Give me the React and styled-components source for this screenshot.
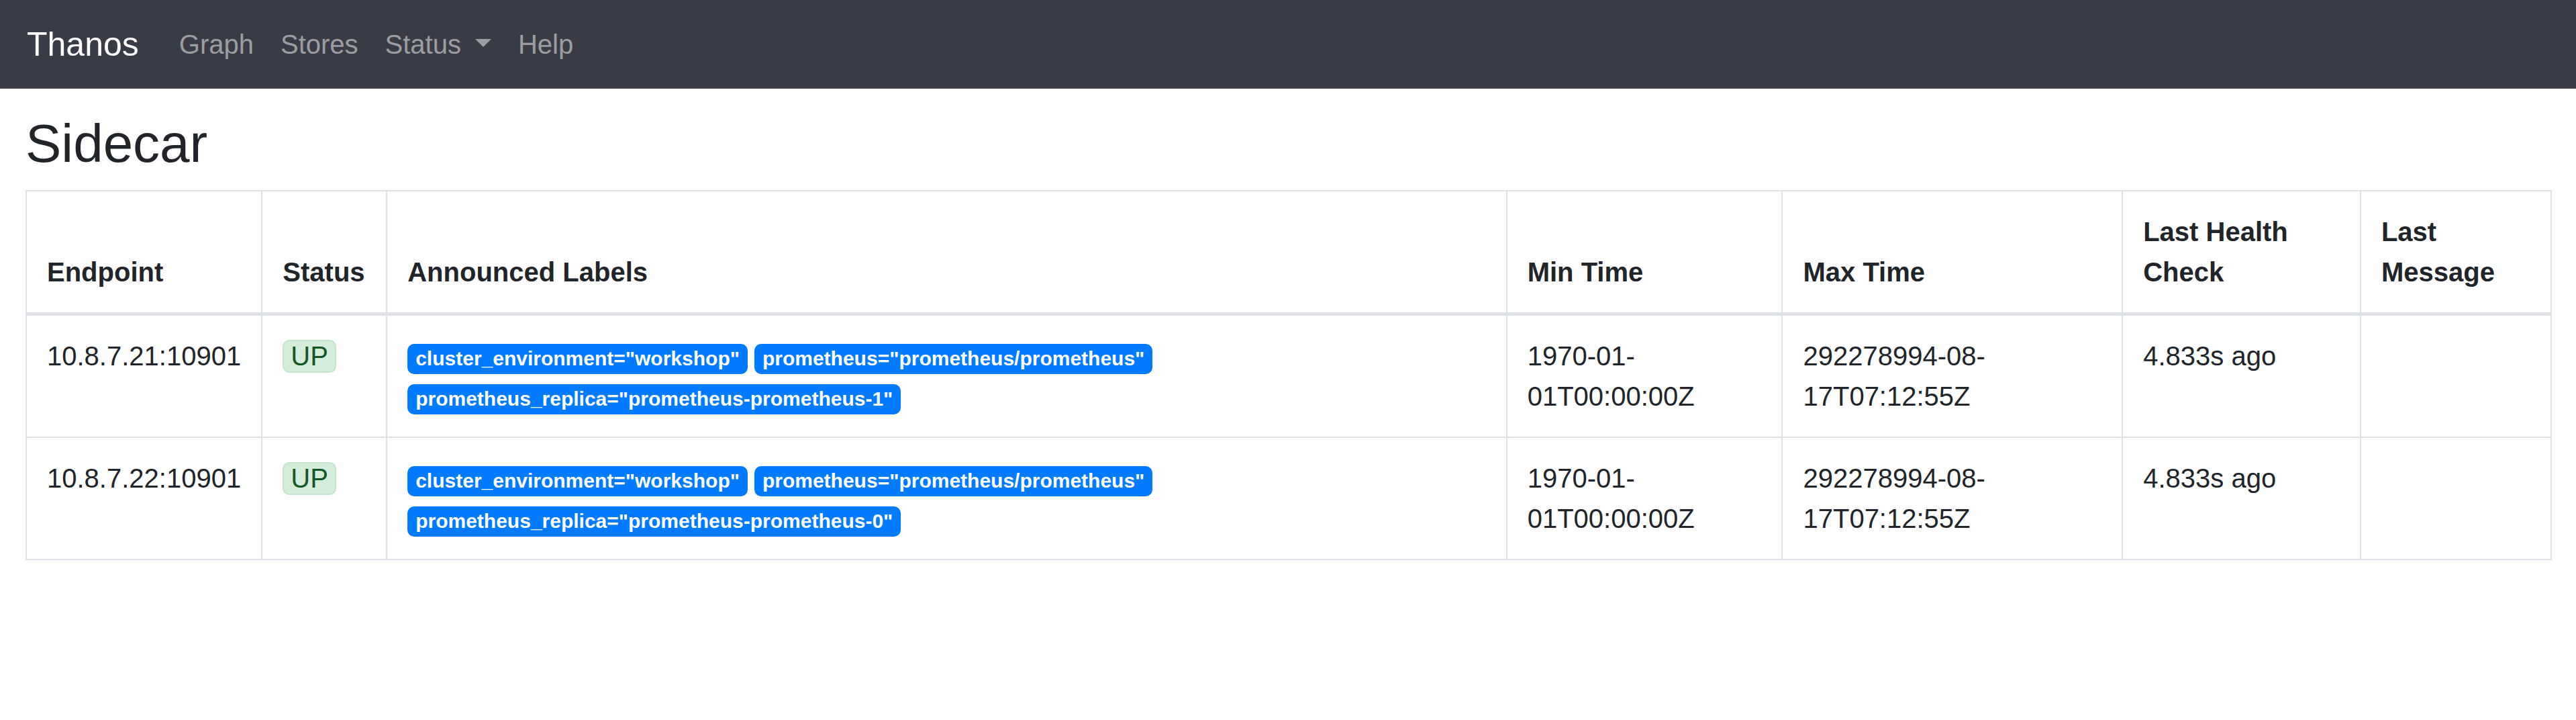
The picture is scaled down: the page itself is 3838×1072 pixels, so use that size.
import styled, { createGlobalStyle } from 'styled-components';

const sidecars = [
  {
    endpoint: '10.8.7.21:10901',
    health: 'UP',
    labels: [
      'cluster_environment="workshop"',
      'prometheus="prometheus/prometheus"',
      'prometheus_replica="prometheus-prometheus-1"',
    ],
    minTime: '1970-01-01T00:00:00Z',
    maxTime: '292278994-08-17T07:12:55Z',
    lastCheck: '4.833s ago',
    lastMessage: '',
  },
  {
    endpoint: '10.8.7.22:10901',
    health: 'UP',
    labels: [
      'cluster_environment="workshop"',
      'prometheus="prometheus/prometheus"',
      'prometheus_replica="prometheus-prometheus-0"',
    ],
    minTime: '1970-01-01T00:00:00Z',
    maxTime: '292278994-08-17T07:12:55Z',
    lastCheck: '4.833s ago',
    lastMessage: '',
  },
];

// column widths as share of the table
const columns = [
  { title: 'Endpoint', width: 9.34 },
  { title: 'Status', width: 4.94 },
  { title: 'Announced Labels', width: 44.35 },
  { title: 'Min Time', width: 10.92 },
  { title: 'Max Time', width: 13.47 },
  { title: 'Last Health Check', width: 9.43 },
  { title: 'Last Message', width: 7.55 },
];

export default function App() {
  return (
    <>
      <GlobalStyle />
      <Navbar>
        <Brand>Thanos</Brand>
        <NavLink>Graph</NavLink>
        <NavLink>Stores</NavLink>
        <NavLink>
          Status
          <Caret />
        </NavLink>
        <NavLink>Help</NavLink>
      </Navbar>
      <Container>
        <Title>Sidecar</Title>
        <Table>
          <colgroup>
            {columns.map((c) => (
              <Col key={c.title} $width={c.width} />
            ))}
          </colgroup>
          <thead>
            <tr>
              {columns.map((c) => (
                <Th key={c.title}>{c.title}</Th>
              ))}
            </tr>
          </thead>
          <tbody>
            {sidecars.map((s) => (
              <tr key={s.endpoint}>
                <Td>{s.endpoint}</Td>
                <Td>
                  <HealthBadge>{s.health}</HealthBadge>
                </Td>
                <Td>
                  {s.labels.map((l) => (
                    <LabelBadge key={l}>{l}</LabelBadge>
                  ))}
                </Td>
                <Td>{s.minTime}</Td>
                <Td>{s.maxTime}</Td>
                <Td>{s.lastCheck}</Td>
                <Td>{s.lastMessage}</Td>
              </tr>
            ))}
          </tbody>
        </Table>
      </Container>
    </>
  );
}

const GlobalStyle = createGlobalStyle`
  html, body {
    margin: 0;
    background: #fff;
  }
  body {
    font-family: "Liberation Sans", Arial, sans-serif;
    font-size: 40px;
    line-height: 1.5;
    color: #212529;
  }
`;

const Navbar = styled.nav`
  display: flex;
  align-items: center;
  box-sizing: border-box;
  height: 132px;
  padding: 0 40px;
  background-color: #393c46;
`;

const Brand = styled.span`
  color: #fff;
  font-size: 50px;
  line-height: 1.5;
  margin-right: 40px;
`;

const NavLink = styled.span`
  color: rgba(255, 255, 255, 0.5);
  font-size: 40px;
  line-height: 1.5;
  padding: 0 20px;
`;

const Caret = styled.span`
  display: inline-block;
  width: 0;
  height: 0;
  margin-left: 21px;
  vertical-align: 10px;
  border-top: 12px solid;
  border-left: 12px solid transparent;
  border-right: 12px solid transparent;
`;

const Container = styled.main`
  padding: 0 36px 0 38px;
`;

const Title = styled.h2`
  font-size: 80px;
  font-weight: 400;
  line-height: 1.2;
  margin: 34px 0 21px;
`;

const Table = styled.table`
  width: 100%;
  table-layout: fixed;
  border-collapse: collapse;
  border: 2px solid #dee2e6;
`;

const Col = styled.col`
  width: ${(p) => p.$width}%;
`;

const Th = styled.th`
  border: 2px solid #dee2e6;
  border-bottom-width: 5px;
  padding: 30px;
  text-align: left;
  vertical-align: bottom;
  font-weight: 700;
`;

const Td = styled.td`
  border: 2px solid #dee2e6;
  padding: 30px;
  vertical-align: top;
`;

const HealthBadge = styled.span`
  display: inline-block;
  line-height: 1;
  padding: 2.5px 10px;
  color: #155724;
  background-color: #d4edda;
  border: 2px solid #c3e6cb;
  border-radius: 10px;
`;

const LabelBadge = styled.span`
  display: inline-block;
  margin-right: 10px;
  padding: 7.5px 12px;
  font-size: 30px;
  font-weight: 700;
  line-height: 1;
  color: #fff;
  background-color: #007bff;
  border-radius: 10px;
  white-space: nowrap;
`;
